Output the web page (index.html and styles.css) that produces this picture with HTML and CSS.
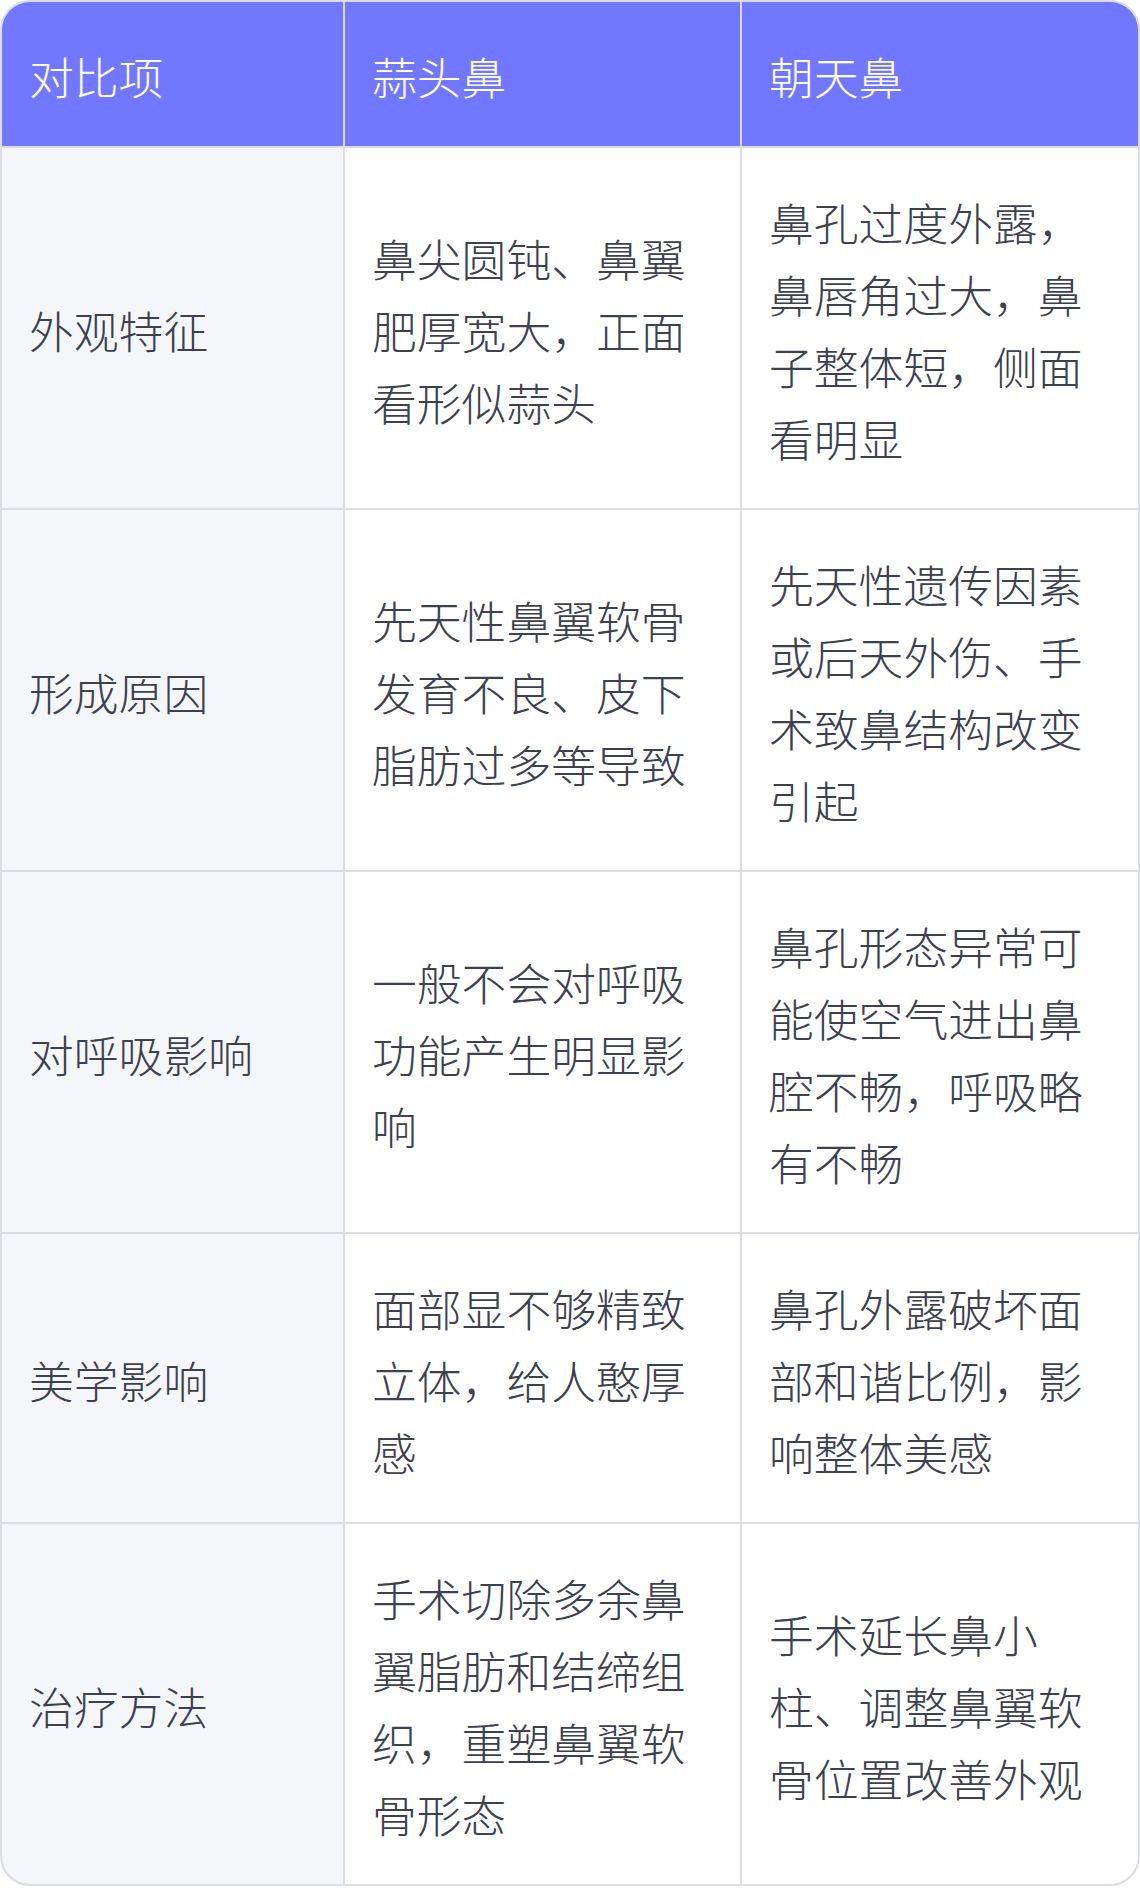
FILE: index.html
```html
<!DOCTYPE html>
<html lang="zh-CN">
<head>
    <meta charset="UTF-8">
    <meta name="viewport" content="width=device-width, initial-scale=1.0">
    <title>蒜头鼻与朝天鼻对比</title>
    <link rel="stylesheet" href="styles.css">
</head>
<body>
    <div class="compare">
        <div class="cell head">对比项</div>
        <div class="cell head">蒜头鼻</div>
        <div class="cell head">朝天鼻</div>

        <div class="cell label">外观特征</div>
        <div class="cell">鼻尖圆钝、鼻翼肥厚宽大，正面看形似蒜头</div>
        <div class="cell">鼻孔过度外露，鼻唇角过大，鼻子整体短，侧面看明显</div>

        <div class="cell label">形成原因</div>
        <div class="cell">先天性鼻翼软骨发育不良、皮下脂肪过多等导致</div>
        <div class="cell">先天性遗传因素或后天外伤、手术致鼻结构改变引起</div>

        <div class="cell label">对呼吸影响</div>
        <div class="cell">一般不会对呼吸功能产生明显影响</div>
        <div class="cell">鼻孔形态异常可能使空气进出鼻腔不畅，呼吸略有不畅</div>

        <div class="cell label">美学影响</div>
        <div class="cell">面部显不够精致立体，给人憨厚感</div>
        <div class="cell">鼻孔外露破坏面部和谐比例，影响整体美感</div>

        <div class="cell label">治疗方法</div>
        <div class="cell">手术切除多余鼻翼脂肪和结缔组织，重塑鼻翼软骨形态</div>
        <div class="cell">手术延长鼻小柱、调整鼻翼软骨位置改善外观</div>
    </div>
</body>
</html>
```

FILE: styles.css
```css
body {
    margin: 0;
    padding: 0;
    background-color: #ffffff;
    font-family: "Noto Sans CJK SC", "Noto Sans", sans-serif;
}
.compare {
    width: 1140px;
    box-sizing: border-box;
    display: grid;
    grid-template-columns: 341px 395px 1fr;
    gap: 2px;
    background-color: #dcdde2;
    border: 2px solid #dcdde2;
    border-radius: 30px;
    overflow: hidden;
}
.cell {
    display: flex;
    align-items: center;
    padding: 38px 29px 34px 27px;
    background-color: #ffffff;
    color: #3d404d;
    font-size: 44.8px;
    font-weight: 300;
    line-height: 72px;
}
.cell.head {
    background-color: #7177ff;
    color: #ffffff;
}
.cell.label {
    background-color: #f5f6fa;
}
```
